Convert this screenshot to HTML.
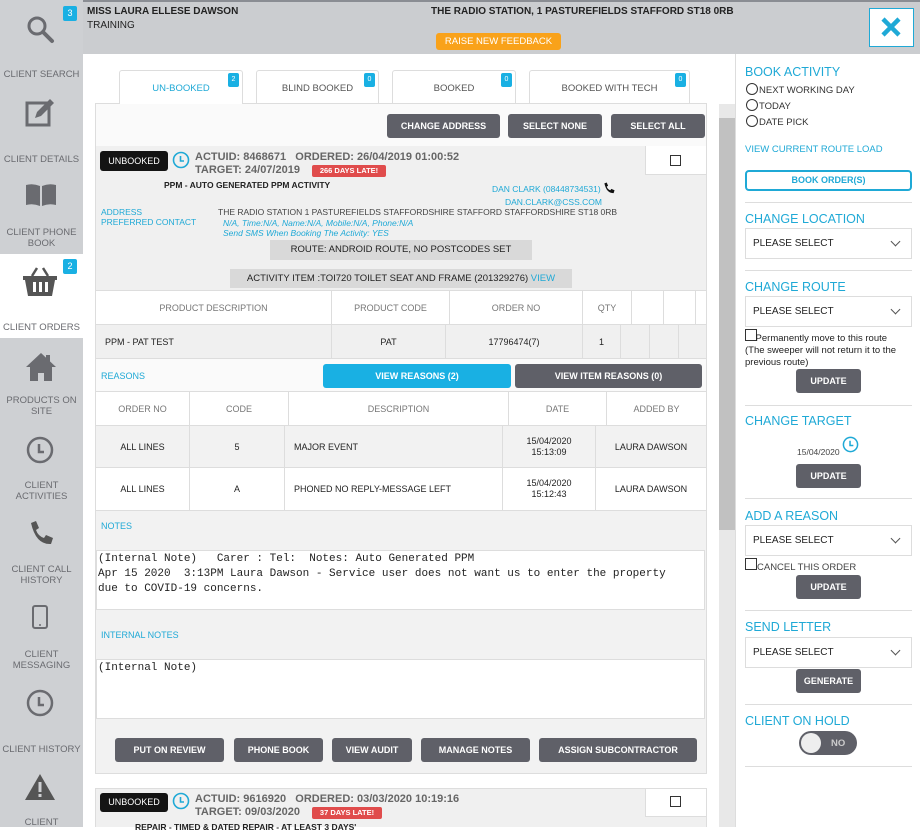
<!DOCTYPE html>
<html><head><meta charset="utf-8"><style>
*{box-sizing:border-box;margin:0;padding:0}
body{width:920px;height:827px;overflow:hidden;position:relative;background:#fff;font-family:"Liberation Sans",sans-serif;font-size:9px;color:#222}
.a{position:absolute}
.side{left:0;top:0;width:83px;height:827px;background:#ced0d3}
.lbl{position:absolute;left:0;width:83px;text-align:center;color:#6a6b70;font-size:9.5px;line-height:11px}
.btn{position:absolute;background:#5f6068;color:#fff;font-weight:bold;font-size:9px;text-align:center;border-radius:3px;line-height:24px;height:24px}
.badge{position:absolute;background:#19b0e3;color:#fff;font-size:7px;text-align:center;border-radius:2px;width:11px;height:14px;line-height:14px}
.tab{position:absolute;top:70px;height:33px;border:1px solid #ddd;border-bottom:none;background:#fff;color:#555;font-size:9.5px;text-align:center;line-height:36px;border-radius:3px 3px 0 0}
.blue{color:#1fa9d6}
.cell{position:absolute;border-right:1px solid #ddd;text-align:center;color:#777;font-size:9px;display:flex;align-items:center;justify-content:center}
.h{position:absolute;left:745px;color:#1fa9d6;font-size:12.5px}
.sel{position:absolute;left:745px;width:167px;height:31px;border:1px solid #ddd;background:#fff;font-size:10px;color:#222;padding-left:7px;line-height:29px}
.sel:after{content:"";position:absolute;right:12px;top:9px;width:6px;height:6px;border-right:1px solid #555;border-bottom:1px solid #555;transform:rotate(45deg)}
.hr{position:absolute;left:745px;width:167px;height:1px;background:#ddd}
.mono{font-family:"Liberation Mono",monospace;font-size:11px;line-height:15px;color:#222;white-space:pre}
.radio{display:inline-block;width:12px;height:12px;border:1px solid #333;border-radius:50%;vertical-align:-2px;margin-right:1px}
.act{position:absolute;left:195px;font-size:11px;font-weight:bold;color:#666;line-height:13px}
</style></head><body>
<div class="a" style="left:0;top:0;width:920px;height:54px;background:#cbcdd0;border-top:2px solid #8a8d93"></div>
<div class="a side"></div>
<div class="a" style="left:0;top:254px;width:83px;height:84px;background:#fff"></div>
<svg class="a" style="left:25px;top:14px" width="32" height="32" viewBox="0 0 32 32"><circle cx="12" cy="12" r="8" fill="none" stroke="#6a6b70" stroke-width="3"/><line x1="18" y1="18" x2="27" y2="27" stroke="#6a6b70" stroke-width="4" stroke-linecap="round"/></svg>
<div class="badge" style="left:63px;top:6px;width:14px;font-size:9px;height:15px">3</div>
<div class="lbl" style="top:69px">CLIENT SEARCH</div>
<svg class="a" style="left:25px;top:98px" width="30" height="30" viewBox="0 0 30 30"><rect x="2" y="5" width="22" height="22" fill="none" stroke="#6a6b70" stroke-width="3"/><path d="M10 20 L12 14 L25 1 L29 5 L16 18 Z" fill="#6a6b70"/></svg>
<div class="lbl" style="top:154px">CLIENT DETAILS</div>
<svg class="a" style="left:25px;top:183px" width="32" height="24" viewBox="0 0 32 24"><path d="M1 2 Q8 0 15 3 V23 Q8 20 1 22Z M17 3 Q24 0 31 2 V22 Q24 20 17 23Z" fill="#6a6b70"/></svg>
<div class="lbl" style="top:227px">CLIENT PHONE<br>BOOK</div>
<svg class="a" style="left:22px;top:266px" width="36" height="32" viewBox="0 0 36 32"><path d="M10 10 L15 2 M26 10 L21 2" stroke="#555" stroke-width="2.5"/><path d="M1 10 H35 V14 H33 L30 30 H6 L3 14 H1Z" fill="#555"/><rect x="11" y="16" width="3" height="10" fill="#fff"/><rect x="17" y="16" width="3" height="10" fill="#fff"/><rect x="23" y="16" width="3" height="10" fill="#fff"/></svg>
<div class="badge" style="left:63px;top:259px;width:14px;font-size:9px;height:15px">2</div>
<div class="lbl" style="top:322px">CLIENT ORDERS</div>
<svg class="a" style="left:25px;top:352px" width="32" height="30" viewBox="0 0 32 30"><path d="M16 1 L1 15 H5 V29 H13 V21 H19 V29 H27 V15 H31Z" fill="#6a6b70"/><rect x="21" y="3" width="4" height="7" fill="#6a6b70"/></svg>
<div class="lbl" style="top:395px">PRODUCTS ON<br>SITE</div>
<svg class="a" style="left:26px;top:436px" width="28" height="28" viewBox="0 0 28 28"><circle cx="14" cy="14" r="12" fill="none" stroke="#6a6b70" stroke-width="2.5"/><path d="M13 8 V16 H18" fill="none" stroke="#6a6b70" stroke-width="2.5"/></svg>
<div class="lbl" style="top:480px">CLIENT<br>ACTIVITIES</div>
<svg class="a" style="left:28px;top:520px" width="26" height="26" viewBox="0 0 26 26"><path d="M3 3 L8 1 L11 8 L8 10 Q10 16 16 18 L18 15 L25 18 L23 24 Q8 25 3 3Z" fill="#555"/></svg>
<div class="lbl" style="top:564px">CLIENT CALL<br>HISTORY</div>
<svg class="a" style="left:32px;top:605px" width="16" height="24" viewBox="0 0 16 24"><rect x="1" y="1" width="14" height="22" rx="2" fill="none" stroke="#6a6b70" stroke-width="2"/><circle cx="8" cy="20" r="1" fill="#6a6b70"/></svg>
<div class="lbl" style="top:649px">CLIENT<br>MESSAGING</div>
<svg class="a" style="left:26px;top:689px" width="28" height="28" viewBox="0 0 28 28"><circle cx="14" cy="14" r="12" fill="none" stroke="#6a6b70" stroke-width="2.5"/><path d="M13 8 V16 H18" fill="none" stroke="#6a6b70" stroke-width="2.5"/></svg>
<div class="lbl" style="top:744px">CLIENT HISTORY</div>
<svg class="a" style="left:24px;top:773px" width="32" height="28" viewBox="0 0 32 28"><path d="M16 1 L31 27 H1Z" fill="#555"/><rect x="14.5" y="9" width="3" height="10" fill="#ced0d3"/><rect x="14.5" y="21" width="3" height="3" fill="#ced0d3"/></svg>
<div class="lbl" style="top:817px">CLIENT</div>

<div class="a" style="left:87px;top:6px;font-weight:bold;font-size:10px">MISS LAURA ELLESE DAWSON</div>
<div class="a" style="left:87px;top:20px;font-size:10px">TRAINING</div>
<div class="a" style="left:431px;top:6px;font-weight:bold;font-size:10px">THE RADIO STATION, 1 PASTUREFIELDS STAFFORD ST18 0RB</div>
<div class="a" style="left:436px;top:33px;width:125px;height:17px;background:#f9a21a;color:#fff;font-size:9.5px;text-align:center;line-height:17px;border-radius:3px">RAISE NEW FEEDBACK</div>
<div class="a" style="left:869px;top:8px;width:45px;height:39px;background:#fff;border:1px solid #1fa9d6"></div>
<svg class="a" style="left:880px;top:16px" width="22" height="22" viewBox="0 0 22 22"><path d="M3 3 L19 19 M19 3 L3 19" stroke="#1fa9d6" stroke-width="4.5"/></svg>

<div class="a" style="left:83px;top:54px;width:652px;height:773px;background:#fff"></div>
<div class="a" style="left:735px;top:54px;width:1px;height:773px;background:#ddd"></div>
<div class="a" style="left:719px;top:104px;width:16px;height:723px;background:#e8e8e8"></div>
<div class="a" style="left:719px;top:118px;width:16px;height:412px;background:#c1c1c1"></div>

<div class="tab" style="left:119px;width:124px;height:34px;color:#1fa9d6;z-index:2">UN-BOOKED</div>
<div class="badge" style="left:228px;top:73px;z-index:3">2</div>
<div class="tab" style="left:256px;width:123px">BLIND BOOKED</div>
<div class="badge" style="left:364px;top:73px">0</div>
<div class="tab" style="left:392px;width:124px">BOOKED</div>
<div class="badge" style="left:501px;top:73px">0</div>
<div class="tab" style="left:529px;width:161px">BOOKED WITH TECH</div>
<div class="badge" style="left:675px;top:73px">0</div>
<div class="a" style="left:95px;top:103px;width:612px;height:671px;border:1px solid #ddd;background:#fafafa"></div>

<div class="btn" style="left:387px;top:114px;width:113px">CHANGE ADDRESS</div>
<div class="btn" style="left:508px;top:114px;width:94px">SELECT NONE</div>
<div class="btn" style="left:611px;top:114px;width:94px">SELECT ALL</div>

<div class="a" style="left:96px;top:146px;width:610px;height:144px;background:#f0f0f0"></div>
<div class="a" style="left:645px;top:146px;width:61px;height:29px;background:#fff;border-left:1px solid #ddd;border-bottom:1px solid #ddd"></div>
<div class="a" style="left:670px;top:155px;width:11px;height:11px;border:1px solid #333;background:#fff"></div>
<div class="a" style="left:100px;top:151px;width:68px;height:20px;background:#141414;color:#fff;font-size:9px;text-align:center;line-height:20px;border-radius:3px">UNBOOKED</div>
<svg class="a" style="left:172px;top:151px" width="18" height="18" viewBox="0 0 18 18"><circle cx="9" cy="9" r="7.5" fill="none" stroke="#1fa9d6" stroke-width="1.6"/><path d="M8.5 5 V10 H12" fill="none" stroke="#1fa9d6" stroke-width="1.6"/></svg>
<div class="act" style="top:151px">ACTUID: 8468671 &nbsp;&nbsp;ORDERED: 26/04/2019 01:00:52<br>TARGET: 24/07/2019</div>
<div class="a" style="left:312px;top:165px;width:74px;height:12px;background:#e04c4c;color:#fff;font-size:7.5px;font-weight:bold;text-align:center;line-height:12px;border-radius:2px">266 DAYS LATE!</div>
<div class="a" style="left:164px;top:180px;font-size:8.5px;font-weight:bold">PPM - AUTO GENERATED PPM ACTIVITY</div>
<div class="a blue" style="left:492px;top:184px;font-size:8.5px">DAN CLARK (08448734531)</div>
<svg class="a" style="left:603px;top:181px" width="12" height="14" viewBox="0 0 26 26"><path d="M3 3 L8 1 L11 8 L8 10 Q10 16 16 18 L18 15 L25 18 L23 24 Q8 25 3 3Z" fill="#111"/></svg>
<div class="a blue" style="left:505px;top:197px;font-size:8.5px">DAN.CLARK@CSS.COM</div>
<div class="a blue" style="left:101px;top:207px;font-size:8.5px;line-height:10px">ADDRESS<br>PREFERRED CONTACT</div>
<div class="a" style="left:218px;top:207px;font-size:8.5px;color:#444">THE RADIO STATION 1 PASTUREFIELDS STAFFORDSHIRE STAFFORD STAFFORDSHIRE ST18 0RB</div>
<div class="a blue" style="left:223px;top:218px;font-size:8.5px;font-style:italic;line-height:10px">N/A, Time:N/A, Name:N/A, Mobile:N/A, Phone:N/A<br>Send SMS When Booking The Activity: YES</div>
<div class="a" style="left:270px;top:240px;width:262px;height:20px;background:#d9d9d9;font-size:9.5px;text-align:center;line-height:20px">ROUTE: ANDROID ROUTE, NO POSTCODES SET</div>
<div class="a" style="left:230px;top:269px;width:342px;height:19px;background:#d9d9d9;font-size:9.5px;text-align:center;line-height:19px">ACTIVITY ITEM :TOI720 TOILET SEAT AND FRAME (201329276) <span class="blue">VIEW</span></div>

<div class="a" style="left:96px;top:290px;width:610px;height:35px;background:#fff;border-top:1px solid #ddd;border-bottom:1px solid #ddd"></div>
<div class="cell" style="left:96px;top:291px;width:236px;height:33px">PRODUCT DESCRIPTION</div>
<div class="cell" style="left:332px;top:291px;width:118px;height:33px">PRODUCT CODE</div>
<div class="cell" style="left:450px;top:291px;width:133px;height:33px">ORDER NO</div>
<div class="cell" style="left:583px;top:291px;width:49px;height:33px">QTY</div>
<div class="cell" style="left:632px;top:291px;width:32px;height:33px"></div>
<div class="cell" style="left:664px;top:291px;width:32px;height:33px"></div>
<div class="a" style="left:96px;top:325px;width:610px;height:34px;background:#f0f0f0;border-bottom:1px solid #ddd"></div>
<div class="cell" style="left:96px;top:325px;width:236px;height:34px;justify-content:flex-start;padding-left:9px;color:#222">PPM - PAT TEST</div>
<div class="cell" style="left:332px;top:325px;width:114px;height:34px;color:#222">PAT</div>
<div class="cell" style="left:446px;top:325px;width:137px;height:34px;color:#222">17796474(7)</div>
<div class="cell" style="left:583px;top:325px;width:38px;height:34px;color:#222">1</div>
<div class="cell" style="left:621px;top:325px;width:29px;height:34px"></div>
<div class="cell" style="left:650px;top:325px;width:29px;height:34px"></div>
<div class="a blue" style="left:101px;top:371px;font-size:9px">REASONS</div>
<div class="a" style="left:323px;top:364px;width:188px;height:24px;background:#19b0e3;color:#fff;font-weight:bold;font-size:9px;text-align:center;line-height:24px;border-radius:3px">VIEW REASONS (2)</div>
<div class="btn" style="left:515px;top:364px;width:187px">VIEW ITEM REASONS (0)</div>

<div class="a" style="left:96px;top:391px;width:610px;height:119px;background:#fff;border-top:1px solid #ddd"></div>
<div class="a" style="left:96px;top:425px;width:610px;height:43px;background:#f2f2f2;border-top:1px solid #ddd;border-bottom:1px solid #ddd"></div>
<div class="a" style="left:96px;top:510px;width:610px;height:1px;background:#ddd"></div>
<div class="cell" style="left:96px;top:392px;width:94px;height:33px">ORDER NO</div>
<div class="cell" style="left:190px;top:392px;width:99px;height:33px">CODE</div>
<div class="cell" style="left:289px;top:392px;width:220px;height:33px">DESCRIPTION</div>
<div class="cell" style="left:509px;top:392px;width:98px;height:33px">DATE</div>
<div class="cell" style="left:607px;top:392px;width:99px;height:33px;border:none">ADDED BY</div>
<div class="cell" style="left:96px;top:426px;width:94px;height:42px;color:#222">ALL LINES</div>
<div class="cell" style="left:190px;top:426px;width:95px;height:42px;color:#222">5</div>
<div class="cell" style="left:285px;top:426px;width:218px;height:42px;color:#222;justify-content:flex-start;padding-left:9px">MAJOR EVENT</div>
<div class="cell" style="left:503px;top:426px;width:93px;height:42px;color:#222;line-height:11px">15/04/2020<br>15:13:09</div>
<div class="cell" style="left:596px;top:426px;width:110px;height:42px;color:#222;border:none">LAURA DAWSON</div>
<div class="cell" style="left:96px;top:468px;width:94px;height:42px;color:#222">ALL LINES</div>
<div class="cell" style="left:190px;top:468px;width:95px;height:42px;color:#222">A</div>
<div class="cell" style="left:285px;top:468px;width:218px;height:42px;color:#222;justify-content:flex-start;padding-left:9px">PHONED NO REPLY-MESSAGE LEFT</div>
<div class="cell" style="left:503px;top:468px;width:93px;height:42px;color:#222;line-height:11px">15/04/2020<br>15:12:43</div>
<div class="cell" style="left:596px;top:468px;width:110px;height:42px;color:#222;border:none">LAURA DAWSON</div>

<div class="a" style="left:96px;top:511px;width:610px;height:262px;background:#f2f2f2"></div>
<div class="a blue" style="left:101px;top:521px;font-size:9px">NOTES</div>
<div class="a mono" style="left:96px;top:550px;width:609px;height:60px;background:#fff;border:1px solid #ddd;padding:1px 1px">(Internal Note)   Carer : Tel:  Notes: Auto Generated PPM
Apr 15 2020  3:13PM Laura Dawson - Service user does not want us to enter the property
due to COVID-19 concerns.</div>
<div class="a blue" style="left:101px;top:630px;font-size:9px">INTERNAL NOTES</div>
<div class="a mono" style="left:96px;top:659px;width:609px;height:60px;background:#fff;border:1px solid #ddd;padding:1px 1px">(Internal Note)</div>
<div class="btn" style="left:115px;top:738px;width:109px">PUT ON REVIEW</div>
<div class="btn" style="left:234px;top:738px;width:89px">PHONE BOOK</div>
<div class="btn" style="left:332px;top:738px;width:80px">VIEW AUDIT</div>
<div class="btn" style="left:421px;top:738px;width:109px">MANAGE NOTES</div>
<div class="btn" style="left:539px;top:738px;width:158px">ASSIGN SUBCONTRACTOR</div>

<div class="a" style="left:95px;top:788px;width:612px;height:39px;background:#f0f0f0;border:1px solid #ddd;border-bottom:none"></div>
<div class="a" style="left:645px;top:789px;width:61px;height:28px;background:#fff;border-left:1px solid #ddd;border-bottom:1px solid #ddd"></div>
<div class="a" style="left:670px;top:796px;width:11px;height:11px;border:1px solid #333;background:#fff"></div>
<div class="a" style="left:100px;top:793px;width:68px;height:19px;background:#141414;color:#fff;font-size:9px;text-align:center;line-height:19px;border-radius:3px">UNBOOKED</div>
<svg class="a" style="left:172px;top:792px" width="18" height="18" viewBox="0 0 18 18"><circle cx="9" cy="9" r="7.5" fill="none" stroke="#1fa9d6" stroke-width="1.6"/><path d="M8.5 5 V10 H12" fill="none" stroke="#1fa9d6" stroke-width="1.6"/></svg>
<div class="act" style="top:793px">ACTUID: 9616920 &nbsp;&nbsp;ORDERED: 03/03/2020 10:19:16<br>TARGET: 09/03/2020</div>
<div class="a" style="left:312px;top:807px;width:70px;height:12px;background:#e04c4c;color:#fff;font-size:7.5px;font-weight:bold;text-align:center;line-height:12px;border-radius:2px">37 DAYS LATE!</div>
<div class="a" style="left:135px;top:822px;font-size:8.5px;font-weight:bold">REPAIR - TIMED &amp; DATED REPAIR - AT LEAST 3 DAYS'</div>

<div class="h" style="top:65px">BOOK ACTIVITY</div>
<div class="a" style="left:746px;top:83px;font-size:9.5px;color:#333;line-height:16px"><span class="radio"></span>NEXT WORKING DAY<br><span class="radio"></span>TODAY<br><span class="radio"></span>DATE PICK</div>
<div class="a blue" style="left:745px;top:144px;font-size:9.5px">VIEW CURRENT ROUTE LOAD</div>
<div class="a" style="left:745px;top:170px;width:167px;height:21px;border:2px solid #1fa9d6;border-radius:4px;color:#1fa9d6;font-weight:bold;font-size:9px;text-align:center;line-height:17px">BOOK ORDER(S)</div>
<div class="hr" style="top:202px"></div>
<div class="h" style="top:212px">CHANGE LOCATION</div>
<div class="sel" style="top:228px">PLEASE SELECT</div>
<div class="hr" style="top:270px"></div>
<div class="h" style="top:280px">CHANGE ROUTE</div>
<div class="sel" style="top:296px">PLEASE SELECT</div>
<div class="a" style="left:745px;top:329px;width:12px;height:12px;border:1px solid #333"></div>
<div class="a" style="left:745px;top:333px;font-size:9.5px;line-height:12px;width:175px;color:#222;white-space:nowrap">&nbsp;&nbsp;&nbsp;&nbsp;Permanently move to this route<br>(The sweeper will not return it to the<br>previous route)</div>
<div class="btn" style="left:796px;top:369px;width:65px">UPDATE</div>
<div class="hr" style="top:405px"></div>
<div class="h" style="top:414px">CHANGE TARGET</div>
<div class="a" style="left:797px;top:447px;font-size:8.5px;color:#444">15/04/2020</div>
<svg class="a" style="left:842px;top:436px" width="17" height="17" viewBox="0 0 18 18"><circle cx="9" cy="9" r="7.5" fill="none" stroke="#1fa9d6" stroke-width="1.6"/><path d="M8.5 5 V10 H12" fill="none" stroke="#1fa9d6" stroke-width="1.6"/></svg>
<div class="btn" style="left:796px;top:464px;width:65px">UPDATE</div>
<div class="hr" style="top:498px"></div>
<div class="h" style="top:509px">ADD A REASON</div>
<div class="sel" style="top:525px">PLEASE SELECT</div>
<div class="a" style="left:745px;top:558px;width:12px;height:12px;border:1px solid #333"></div>
<div class="a" style="left:757px;top:562px;font-size:9.5px;color:#444">CANCEL THIS ORDER</div>
<div class="btn" style="left:796px;top:575px;width:65px">UPDATE</div>
<div class="hr" style="top:610px"></div>
<div class="h" style="top:620px">SEND LETTER</div>
<div class="sel" style="top:637px">PLEASE SELECT</div>
<div class="btn" style="left:796px;top:669px;width:65px">GENERATE</div>
<div class="hr" style="top:704px"></div>
<div class="h" style="top:714px">CLIENT ON HOLD</div>
<div class="a" style="left:799px;top:731px;width:58px;height:24px;background:#5f6068;border-radius:12px"></div>
<div class="a" style="left:801px;top:733px;width:20px;height:20px;background:#eee;border-radius:50%"></div>
<div class="a" style="left:831px;top:738px;color:#ccc;font-size:9.5px;font-weight:bold">NO</div>
<div class="hr" style="top:766px"></div>
</body></html>
